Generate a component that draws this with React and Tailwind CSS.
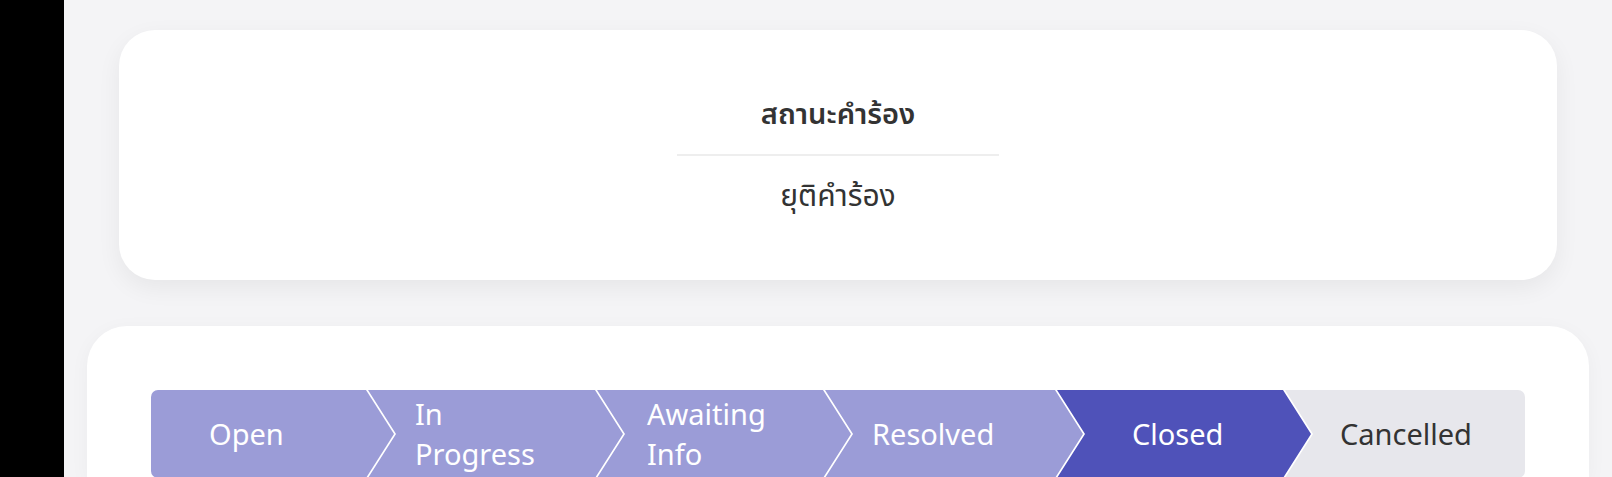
import React from "react";

const mid = "[clip-path:polygon(0_0,calc(100%_-_28px)_0,100%_50%,calc(100%_-_28px)_100%,0_100%,28px_50%)]";
const first = "[clip-path:polygon(0_0,calc(100%_-_28px)_0,100%_50%,calc(100%_-_28px)_100%,0_100%)]";
const last = "[clip-path:polygon(0_0,100%_0,100%_100%,0_100%,28px_50%)]";

export default function App() {
  return (
    <div className="flex min-h-[477px] w-full bg-[#f4f4f6] font-['Noto_Sans','Noto_Sans_Thai',sans-serif]">
      <div className="w-[64px] shrink-0 bg-black" />
      <div className="flex flex-1 flex-col pt-[30px]">
        <div className="mx-[55px] flex h-[250px] flex-col items-center rounded-[36px] bg-white pt-[63px] shadow-[0_8px_24px_rgba(0,0,0,0.06)]">
          <div className="text-[29px] font-semibold leading-[40px] text-[#333]">สถานะคำร้อง</div>
          <div className="mt-[21px] mb-[19px] h-[2px] w-[322px] bg-[#eeeeee]" />
          <div className="text-[30px] leading-[40px] text-[#333]">ยุติคำร้อง</div>
        </div>
        <div className="mx-[23px] mt-[46px] rounded-t-[40px] bg-white px-[64px] pt-[64px] shadow-[0_4px_20px_rgba(0,0,0,0.04)]">
          <div className="flex h-[88px] overflow-hidden rounded-[7px] text-[29px] leading-[40px]">
            <div className={`flex w-[243px] shrink-0 items-center bg-[#9b9cd7] pl-[58px] text-white ${first}`}>Open</div>
            <div className={`-ml-[26px] flex w-[255px] shrink-0 items-center bg-[#9b9cd7] pl-[47px] text-white ${mid}`}>In<br />Progress</div>
            <div className={`-ml-[26px] flex w-[254px] shrink-0 items-center bg-[#9b9cd7] pl-[50px] text-white ${mid}`}>Awaiting<br />Info</div>
            <div className={`-ml-[26px] flex w-[258px] shrink-0 items-center bg-[#9b9cd7] pl-[47px] text-white ${mid}`}>Resolved</div>
            <div className={`-ml-[26px] flex w-[254px] shrink-0 items-center bg-[#4f52b9] pl-[75px] text-white ${mid}`}>Closed</div>
            <div className={`-ml-[26px] flex w-[240px] shrink-0 items-center bg-[#e7e7ec] pl-[55px] text-[#333] ${last}`}>Cancelled</div>
          </div>
        </div>
      </div>
    </div>
  );
}
